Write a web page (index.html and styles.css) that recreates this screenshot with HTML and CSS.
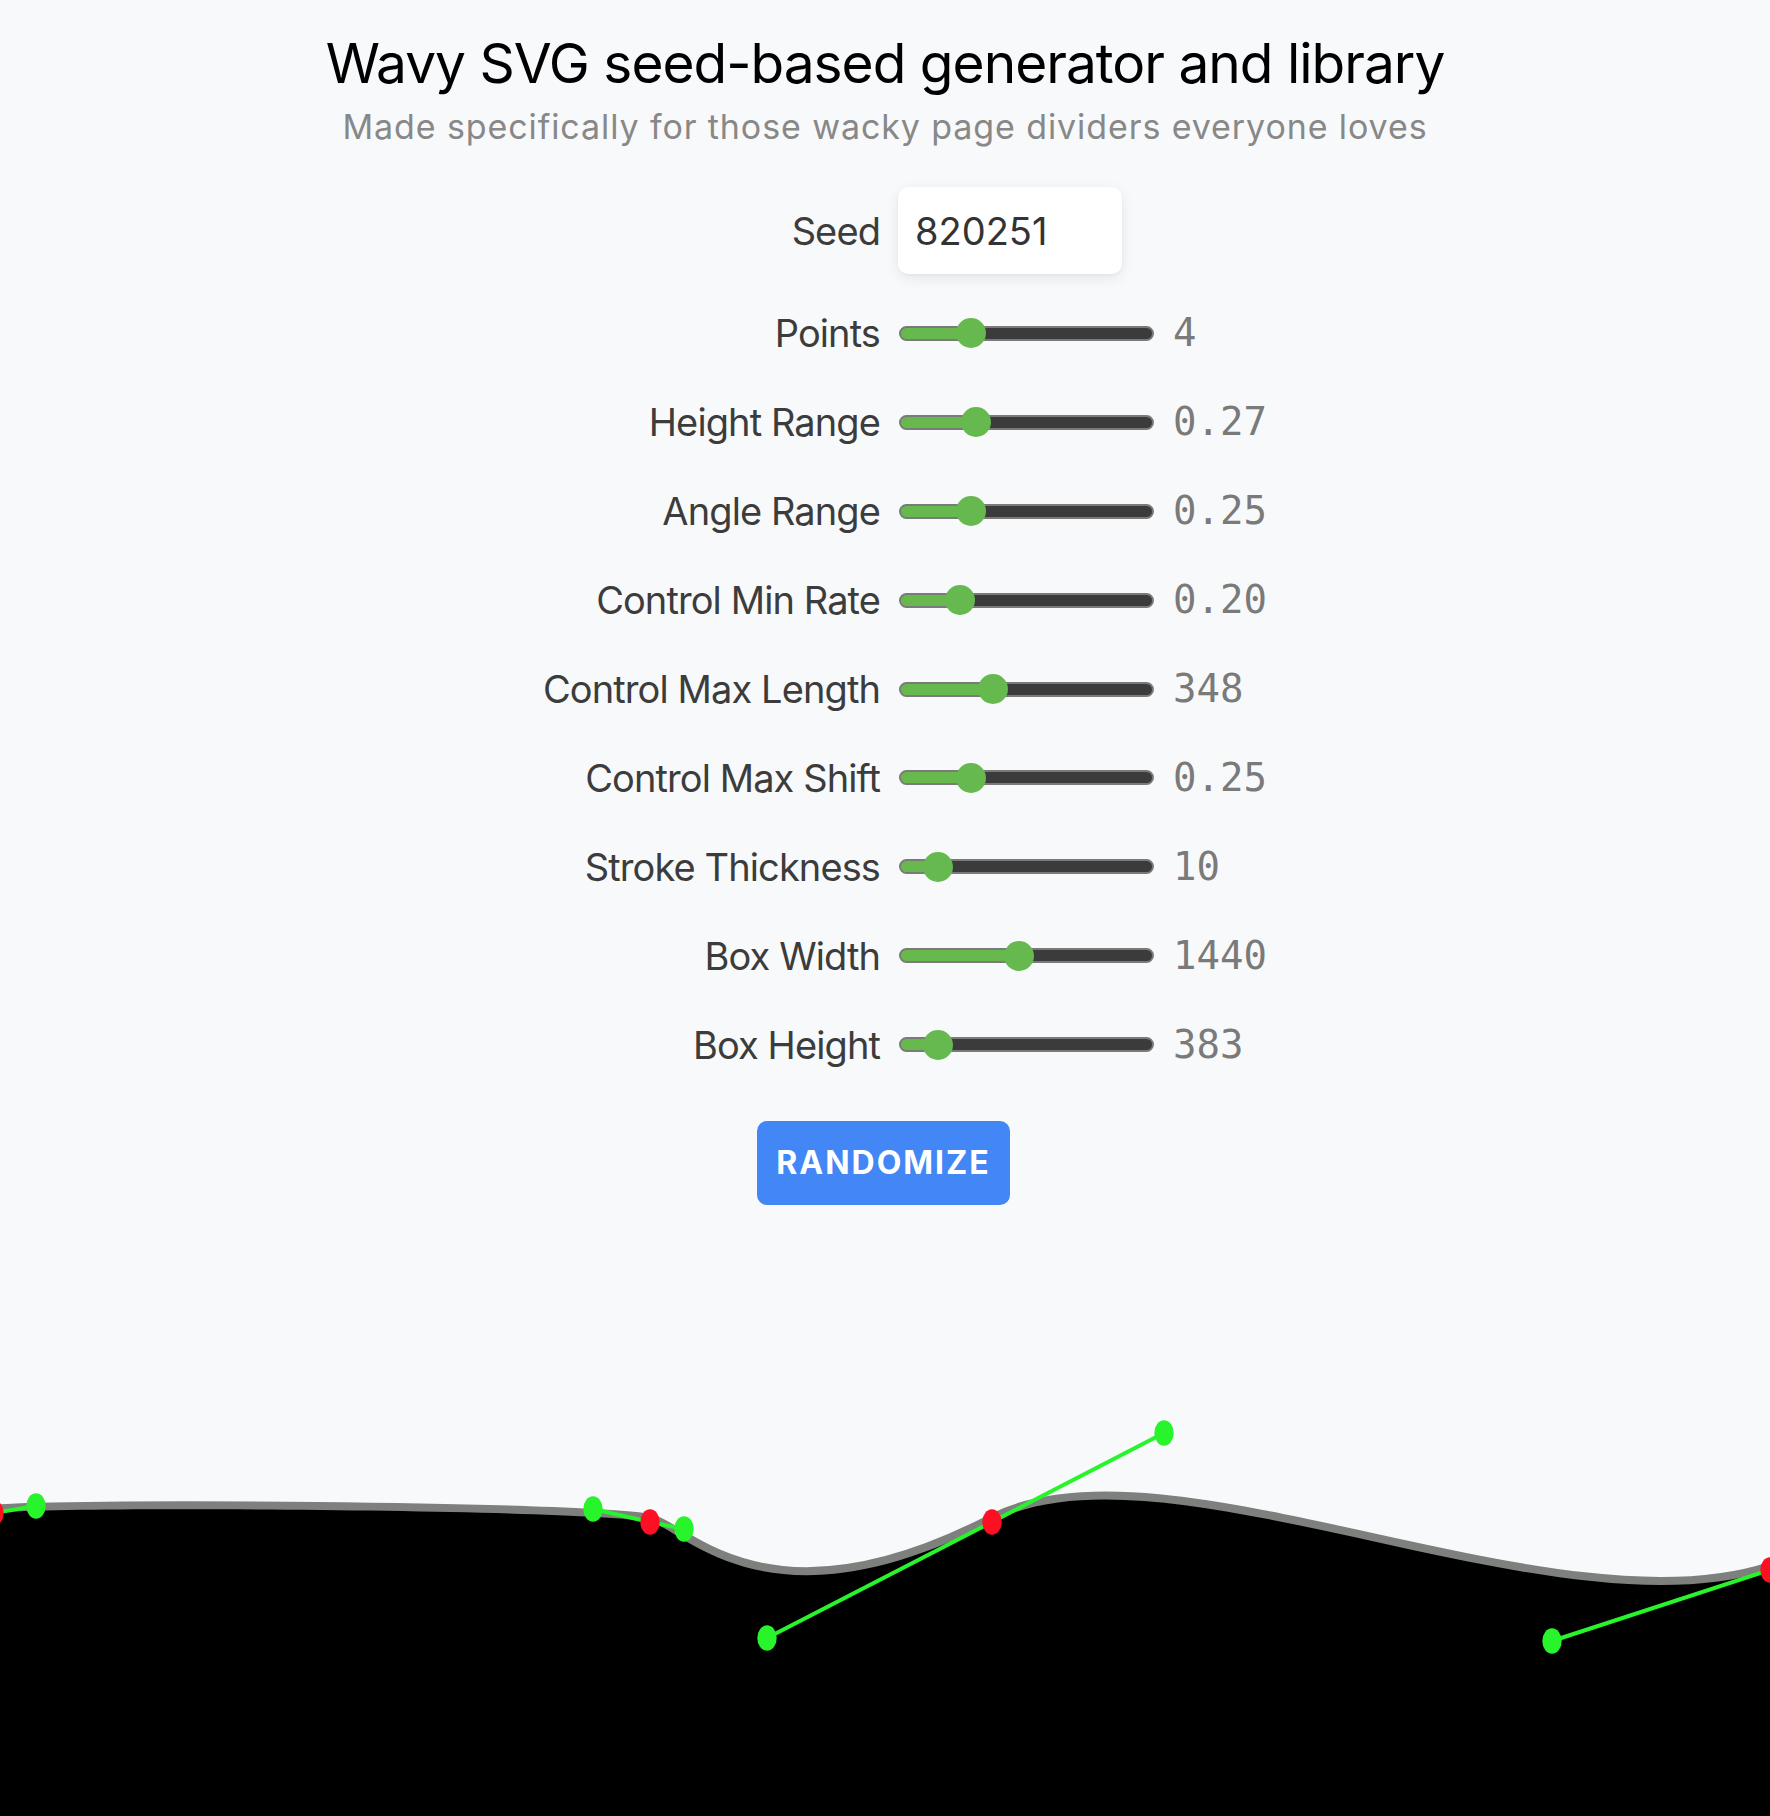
FILE: index.html
```html
<!DOCTYPE html>
<html lang="en">
<head>
<meta charset="utf-8">
<title>Wavy SVG seed-based generator and library</title>
<link rel="stylesheet" href="styles.css">
</head>
<body>
<main class="page">
  <header class="head">
    <h1 class="title">Wavy SVG seed-based generator and library</h1>
    <p class="subtitle">Made specifically for those wacky page dividers everyone loves</p>
  </header>

  <form class="form">
    <div class="row row-seed">
      <label class="label" for="seed">Seed</label>
      <input class="seed" id="seed" type="text" value="820251">
    </div>
    <div class="row">
      <label class="label">Points</label>
      <input class="range" type="range" min="1" max="13" step="1" value="4" style="--fill:70.25px">
      <span class="value">4</span>
    </div>
    <div class="row">
      <label class="label">Height Range</label>
      <input class="range" type="range" min="0" max="1" step="0.01" value="0.27" style="--fill:74.7px">
      <span class="value">0.27</span>
    </div>
    <div class="row">
      <label class="label">Angle Range</label>
      <input class="range" type="range" min="0" max="1" step="0.01" value="0.25" style="--fill:70.25px">
      <span class="value">0.25</span>
    </div>
    <div class="row">
      <label class="label">Control Min Rate</label>
      <input class="range" type="range" min="0" max="1" step="0.01" value="0.20" style="--fill:59.2px">
      <span class="value">0.20</span>
    </div>
    <div class="row">
      <label class="label">Control Max Length</label>
      <input class="range" type="range" min="0" max="1000" step="1" value="348" style="--fill:91.9px">
      <span class="value">348</span>
    </div>
    <div class="row">
      <label class="label">Control Max Shift</label>
      <input class="range" type="range" min="0" max="1" step="0.01" value="0.25" style="--fill:70.25px">
      <span class="value">0.25</span>
    </div>
    <div class="row">
      <label class="label">Stroke Thickness</label>
      <input class="range" type="range" min="0" max="100" step="1" value="10" style="--fill:37.1px">
      <span class="value">10</span>
    </div>
    <div class="row">
      <label class="label">Box Width</label>
      <input class="range" type="range" min="0" max="3100" step="1" value="1440" style="--fill:117.7px">
      <span class="value">1440</span>
    </div>
    <div class="row">
      <label class="label">Box Height</label>
      <input class="range" type="range" min="0" max="3830" step="1" value="383" style="--fill:37.1px">
      <span class="value">383</span>
    </div>
  </form>

  <div class="actions">
    <button class="btn" type="button">RANDOMIZE</button>
  </div>

  <svg class="wave" width="1770" height="516" viewBox="0 1300 1770 516" xmlns="http://www.w3.org/2000/svg">
    <path class="wave-stroke" d="M -30 1516 L -6 1513 C 36 1506, 593 1509, 650 1522 C 684 1529, 767 1638, 992 1522 C 1164 1433, 1552 1641, 1770 1570 L 1800 1560"/>
    <path class="wave-fill" d="M -30 1516 L -6 1513 C 36 1506, 593 1509, 650 1522 C 684 1529, 767 1638, 992 1522 C 1164 1433, 1552 1641, 1770 1570 L 1800 1560 L 1800 1830 L -30 1830 Z"/>
    <g class="handles">
      <polyline points="-6,1513 36,1506"/>
      <polyline points="593,1509 650,1522 684,1529"/>
      <polyline points="767,1638 992,1522 1164,1433"/>
      <polyline points="1552,1641 1770,1570"/>
    </g>
    <g class="ctrl">
      <ellipse cx="36" cy="1506" rx="9.7" ry="12.7"/>
      <ellipse cx="593" cy="1509" rx="9.7" ry="12.7"/>
      <ellipse cx="684" cy="1529" rx="9.7" ry="12.7"/>
      <ellipse cx="767" cy="1638" rx="9.7" ry="12.7"/>
      <ellipse cx="1164" cy="1433" rx="9.7" ry="12.7"/>
      <ellipse cx="1552" cy="1641" rx="9.7" ry="12.7"/>
    </g>
    <g class="anchor">
      <ellipse cx="-6" cy="1513" rx="9.7" ry="12.7"/>
      <ellipse cx="650" cy="1522" rx="9.7" ry="12.7"/>
      <ellipse cx="992" cy="1522" rx="9.7" ry="12.7"/>
      <ellipse cx="1770" cy="1570" rx="9.7" ry="12.7"/>
    </g>
  </svg>
</main>
</body>
</html>
```

FILE: styles.css
```css
html, body {
  margin: 0;
  padding: 0;
  height: 1816px;
  overflow: hidden;
  background: #f8f9fb;
}

body {
  font-family: Inter, "Noto Sans", "Liberation Sans", sans-serif;
  color: #3c3c3c;
}

.page {
  display: flex;
  flex-direction: column;
  padding-top: 30px;
}

.head {
  text-align: center;
}

.title {
  margin: 0;
  font-size: 55px;
  line-height: 66px;
  font-weight: 400;
  letter-spacing: -1px;
  color: #000;
}

.subtitle {
  margin: 11px 0 0;
  font-size: 34px;
  line-height: 40px;
  letter-spacing: 0.9px;
  color: #888;
}

.form {
  margin-top: 40px;
  display: flex;
  flex-direction: column;
}

.row {
  display: grid;
  grid-template-columns: 880px 255px 1fr;
  column-gap: 19px;
  align-items: center;
  height: 88.9px;
}

.row-seed {
  height: 87px;
  margin-bottom: 15px;
}

.label {
  text-align: right;
  font-size: 38px;
  line-height: 46px;
  letter-spacing: -0.9px;
  color: #3c3c3c;
}

.seed {
  box-sizing: border-box;
  width: 224px;
  height: 87px;
  margin: 0;
  margin-left: -1px;
  padding: 0 17px;
  border: none;
  border-radius: 10px;
  background: #fff;
  box-shadow: 0 4px 14px rgba(0, 0, 0, 0.08), 0 1px 3px rgba(0, 0, 0, 0.04);
  font-family: Inter, "Noto Sans", sans-serif;
  font-size: 38px;
  color: #333;
  outline: none;
}

.range {
  -webkit-appearance: none;
  appearance: none;
  width: 255px;
  height: 30px;
  margin: 0;
  padding: 0;
  background: transparent;
}

.range::-webkit-slider-runnable-track {
  box-sizing: border-box;
  height: 15px;
  border: 2px solid #7a7a7a;
  border-radius: 8px;
  background: linear-gradient(to right, #67b84d 0, #67b84d var(--fill), #3b3b3b var(--fill), #3b3b3b 100%);
}

.range::-webkit-slider-thumb {
  -webkit-appearance: none;
  appearance: none;
  width: 30px;
  height: 30px;
  margin-top: -9.5px;
  border: none;
  border-radius: 50%;
  background: #66b94f;
}

.value {
  font-family: "DejaVu Sans Mono", "Liberation Mono", monospace;
  font-size: 39px;
  line-height: 46px;
  color: #7a7a7a;
}

.actions {
  margin-top: 31.6px;
  display: flex;
  justify-content: center;
}

.btn {
  width: 253px;
  height: 84px;
  margin-left: -3px;
  border: none;
  border-radius: 10px;
  background: #4287f5;
  color: #fff;
  font-family: Inter, "Noto Sans", sans-serif;
  font-size: 32px;
  font-weight: 700;
  letter-spacing: 2px;
  padding: 0;
}

.wave {
  display: block;
  margin-top: 95px;
  overflow: visible;
}

.wave-stroke {
  fill: none;
  stroke: #7e807d;
  stroke-width: 16;
}

.wave-fill {
  fill: #000;
}

.handles polyline {
  fill: none;
  stroke: #27f42b;
  stroke-width: 4;
}

.ctrl ellipse {
  fill: #27f42b;
}

.anchor ellipse {
  fill: #ff0f23;
}
```
